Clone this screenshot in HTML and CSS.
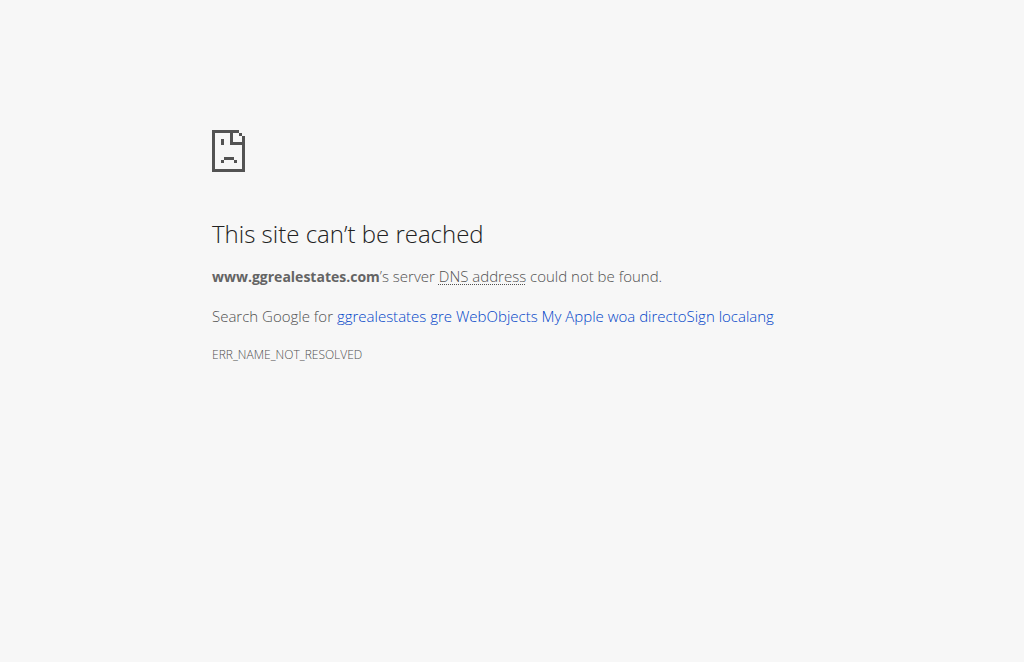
FILE: index.html
```html
<!DOCTYPE html>
<html lang="en">
<head>
<meta charset="utf-8">
<title>www.ggrealestates.com</title>
<link rel="stylesheet" href="styles.css">
</head>
<body>
<main class="error-page">
<svg class="error-icon" viewBox="0 0 33 42" shape-rendering="crispEdges" aria-hidden="true"><path fill="#535353" d="M0 0h27v3H0zM0 3h3v36H0zM0 39h33v3H0zM30 6h3v33h-3zM27 3h3v3h-3zM18 3h3v12h-3zM21 12h9v3h-9zM9 9h3v6H9zM12 27h10v3H12zM9 30h3v3H9zM22 30h3v3h-3z"/></svg>
<h1 class="title">This site can’t be reached</h1>
<p class="message"><strong class="host">www.ggrealestates.com</strong>’s server <abbr class="term" title="DNS address">DNS address</abbr> could not be found.</p>
<p class="message">Search Google for <a class="link" href="#">ggrealestates gre WebObjects My Apple woa directoSign localang</a></p>
<p class="code">ERR_NAME_NOT_RESOLVED</p>
</main>
</body>
</html>
```
FILE: styles.css
```css
body {
  margin: 0;
  background: #f7f7f7;
  color: #505050;
  font-family: "Segoe UI", "Open Sans", "Noto Sans", sans-serif;
  font-size: 15px;
  font-weight: 320;
  line-height: 24px;
}
.error-page {
  box-sizing: border-box;
  max-width: 600px;
  margin: 0 auto;
  padding-top: 130px;
}
.error-icon {
  display: block;
  width: 33px;
  height: 42px;
}
.title {
  margin: 47px 0 16px;
  color: #222;
  font-size: 24px;
  font-weight: 320;
  line-height: 29px;
}
.message {
  margin: 0 0 15px;
}
.host {
  color: #646464;
  font-size: 14px;
  font-weight: 700;
}
.term {
  text-decoration: underline dotted 1px;
  text-underline-offset: 2px;
  text-decoration-skip-ink: none;
}
.link {
  color: #0044c8;
  text-decoration: none;
}
.code {
  margin: 0;
  font-size: 12px;
}
```
